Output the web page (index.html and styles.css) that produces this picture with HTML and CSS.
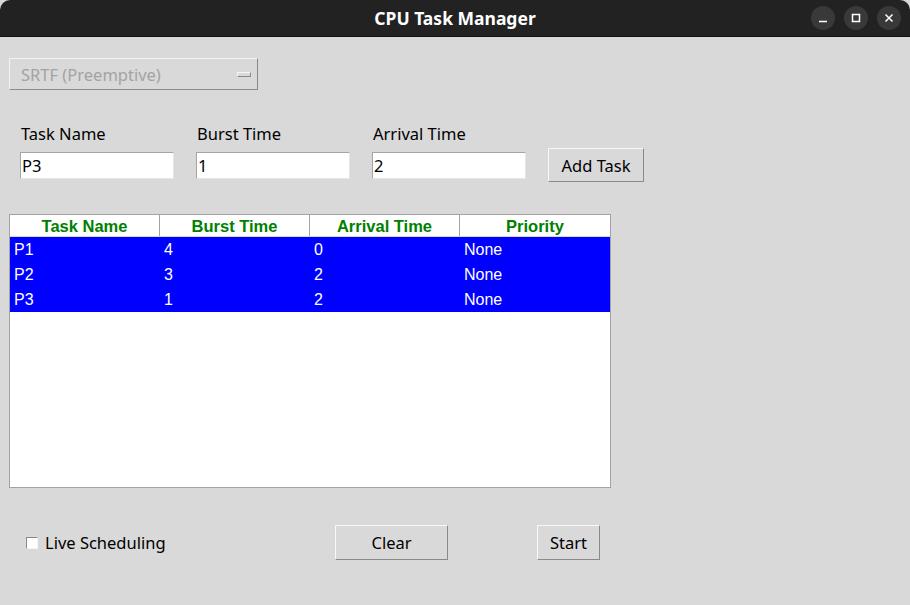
FILE: index.html
```html
<!DOCTYPE html>
<html>
<head>
<meta charset="utf-8">
<link rel="stylesheet" href="styles.css">
</head>
<body>
<div class="window">
  <div class="titlebar">
    <div class="title">CPU Task Manager</div>
    <div class="controls">
      <div class="ctl"><svg width="24" height="24" viewBox="0 0 24 24"><line x1="8" y1="15.5" x2="16" y2="15.5" stroke="#fff" stroke-width="1.5"/></svg></div>
      <div class="ctl"><svg width="24" height="24" viewBox="0 0 24 24"><rect x="8.5" y="8.5" width="7" height="7" fill="none" stroke="#fff" stroke-width="1.5"/></svg></div>
      <div class="ctl"><svg width="24" height="24" viewBox="0 0 24 24"><path d="M8.5 8.5 L15.5 15.5 M15.5 8.5 L8.5 15.5" stroke="#fff" stroke-width="1.5"/></svg></div>
    </div>
  </div>
  <div class="content">
    <div class="dropdown">
      <span class="dd-text">SRTF (Preemptive)</span>
      <span class="dd-ind"></span>
    </div>
    <div class="form">
      <div class="lbl">Task Name</div>
      <div class="lbl">Burst Time</div>
      <div class="lbl">Arrival Time</div>
      <div></div>
      <div class="entry">P3</div>
      <div class="entry">1</div>
      <div class="entry">2</div>
      <div class="btn btn-add">Add Task</div>
    </div>
    <div class="table">
      <div class="thead">
        <div class="th">Task Name</div>
        <div class="th">Burst Time</div>
        <div class="th">Arrival Time</div>
        <div class="th">Priority</div>
      </div>
      <div class="tr"><div class="td">P1</div><div class="td">4</div><div class="td">0</div><div class="td">None</div></div>
      <div class="tr"><div class="td">P2</div><div class="td">3</div><div class="td">2</div><div class="td">None</div></div>
      <div class="tr"><div class="td">P3</div><div class="td">1</div><div class="td">2</div><div class="td">None</div></div>
    </div>
    <div class="bottom">
      <div class="check"><span class="box"></span><span class="check-lbl">Live Scheduling</span></div>
      <div class="btn btn-clear">Clear</div>
      <div class="btn btn-start">Start</div>
    </div>
  </div>
</div>
</body>
</html>
```
FILE: styles.css
```css
html, body {
  margin: 0;
  padding: 0;
}
body {
  width: 910px;
  height: 605px;
  overflow: hidden;
  background: #d9d9d9;
  font-family: "Noto Sans", "DejaVu Sans", sans-serif;
  font-size: 16.5px;
  color: #000;
}
.window {
  display: flex;
  flex-direction: column;
  height: 605px;
}
.titlebar {
  height: 36px;
  background: #222222;
  border-bottom: 1px solid #111;
  position: relative;
  display: flex;
  align-items: center;
  justify-content: center;
  border-radius: 10px 10px 0 0;
}
.title {
  color: #fff;
  font-weight: bold;
  font-size: 17.5px;
}
.controls {
  position: absolute;
  right: 9px;
  top: 6px;
  display: flex;
  gap: 9px;
}
.ctl {
  width: 24px;
  height: 24px;
  border-radius: 50%;
  background: #393939;
}
.ctl svg { display: block; }
.content {
  padding: 21px 0 0 9px;
  display: flex;
  flex-direction: column;
}
.dropdown {
  height: 30px;
  border: 1px solid;
  border-color: #f4f4f4 #8a8a8a #8a8a8a #f4f4f4;
  display: flex;
  align-items: center;
  justify-content: space-between;
  padding: 0 6px 0 11px;
  box-sizing: content-box;
  width: 230px;
}
.dd-text {
  color: #a3a3a3;
  font-size: 16.5px;
}
.dd-ind {
  width: 12px;
  height: 3px;
  border: 1px solid;
  border-color: #f4f4f4 #8a8a8a #8a8a8a #f4f4f4;
}
.form {
  display: grid;
  grid-template-columns: 154px 154px 154px 96px;
  column-gap: 22px;
  row-gap: 4px;
  align-items: center;
  margin: 34px 0 0 11px;
}
.lbl {
  padding-left: 1px;
  line-height: 20px;
}
.entry {
  background: #fff;
  border: 1px solid;
  border-color: #a5a5a5 #e6e6e6 #e6e6e6 #a5a5a5;
  box-sizing: border-box;
  height: 27px;
  padding-left: 1px;
  line-height: 25px;
}
.btn {
  box-sizing: border-box;
  border: 1px solid;
  border-color: #f8f8f8 #8a8a8a #8a8a8a #f8f8f8;
  background: #d9d9d9;
  display: flex;
  align-items: center;
  justify-content: center;
}
.btn-add {
  height: 34px;
}
.table {
  margin-top: 32px;
  width: 602px;
  height: 274px;
  box-sizing: border-box;
  border: 1px solid #a3a3a3;
  background: #fff;
  font-family: "Liberation Sans", Arial, sans-serif;
  font-size: 16px;
}
.thead {
  display: grid;
  grid-template-columns: repeat(4, 150px);
  height: 21px;
  border-bottom: 1px solid #d9d9d9;
}
.th {
  color: #008000;
  font-weight: bold;
  font-size: 16.5px;
  text-align: center;
  padding-top: 2px;
  line-height: 19px;
  border-right: 1px solid #a3a3a3;
  box-sizing: border-box;
}
.th:last-child { border-right: none; }
.tr {
  display: grid;
  grid-template-columns: repeat(4, 150px);
  height: 25px;
  background: #0000ff;
}
.td {
  color: #fff;
  padding-left: 4px;
  line-height: 25px;
}
.bottom {
  display: flex;
  align-items: center;
  height: 35px;
  margin-top: 37px;
}
.check {
  display: flex;
  align-items: center;
  margin-left: 17px;
  width: 309px;
}
.box {
  width: 10px;
  height: 10px;
  background: #fff;
  border: 1px solid;
  border-color: #8a8a8a #f4f4f4 #f4f4f4 #8a8a8a;
  margin-right: 7px;
}
.btn-clear {
  width: 113px;
  height: 35px;
}
.btn-start {
  width: 63px;
  height: 35px;
  margin-left: 89px;
}
```
